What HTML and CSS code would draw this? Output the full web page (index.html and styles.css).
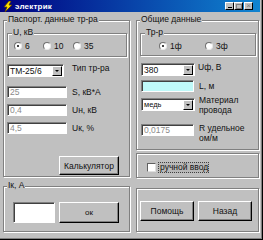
FILE: index.html
```html
<!DOCTYPE html>
<html lang="ru">
<head>
    <meta charset="UTF-8">
    <title>электрик</title>
    <link rel="stylesheet" href="styles.css">
</head>
<body>
<div class="window">
    <div class="titlebar">
        <svg class="app-icon" width="10" height="11" viewBox="0 0 10 11">
            <polygon points="6,0 1,6 4,6 2,11 9,4 6,4 8,0" fill="#ffe000" stroke="#604000" stroke-width="0.8"/>
        </svg>
        <span class="title">электрик</span>
        <div class="caption">
            <span class="cap-btn"><span class="min-glyph"></span></span>
            <span class="cap-btn"><span class="max-glyph"></span></span>
            <span class="cap-btn close">×</span>
        </div>
    </div>

    <div class="client">
        <!-- left column -->
        <div class="col left-col">
            <div class="group passport">
                <div class="gtitle">Паспорт. данные тр-ра</div>
                <div class="group volt">
                    <div class="gtitle inner-title">U, кВ</div>
                    <div class="radios volt-radios">
                        <label class="radio-item w29"><span class="radio checked"></span>6</label>
                        <label class="radio-item w30"><span class="radio"></span>10</label>
                        <label class="radio-item"><span class="radio"></span>35</label>
                    </div>
                </div>
                <div class="row type-row">
                    <div class="combo tm"><span class="combo-text">ТМ-25/6</span><span class="drop"></span></div>
                    <span class="lbl combo-lbl">Тип тр-ра</span>
                </div>
                <div class="row field-row first">
                    <div class="edit disabled w60">25</div>
                    <span class="lbl edit-lbl">S, кВ*А</span>
                </div>
                <div class="row field-row">
                    <div class="edit disabled w60">0,4</div>
                    <span class="lbl edit-lbl">Uн, кВ</span>
                </div>
                <div class="row field-row">
                    <div class="edit disabled w60">4,5</div>
                    <span class="lbl edit-lbl">Uк, %</span>
                </div>
                <div class="btn calc">Калькулятор</div>
            </div>

            <div class="group ik">
                <div class="gtitle">Iк, А</div>
                <div class="row ik-row">
                    <div class="edit ik-edit"></div>
                    <div class="btn ok">ок</div>
                </div>
            </div>
        </div>

        <!-- right column -->
        <div class="col right-col">
            <div class="group common">
                <div class="gtitle">Общие данные</div>
                <div class="group phase">
                    <div class="gtitle inner-title">Тр-р</div>
                    <div class="radios phase-radios">
                        <label class="radio-item w46"><span class="radio checked"></span>1ф</label>
                        <label class="radio-item"><span class="radio"></span>3ф</label>
                    </div>
                </div>
                <div class="row r-row type-row">
                    <div class="combo w54"><span class="combo-text">380</span><span class="drop"></span></div>
                    <span class="lbl combo-lbl">Uф, В</span>
                </div>
                <div class="row r-row len-row">
                    <div class="edit cyan w53"></div>
                    <span class="lbl edit-lbl">L, м</span>
                </div>
                <div class="row r-row mat-row">
                    <div class="combo w54"><span class="combo-text small">медь</span><span class="drop"></span></div>
                    <span class="lbl two-line mat-lbl">Материал<br>провода</span>
                </div>
                <div class="row r-row res-row">
                    <div class="edit disabled w53">0,0175</div>
                    <span class="lbl two-line res-lbl">R удельное<br>ом/м</span>
                </div>
            </div>

            <div class="group manual">
                <label class="check-row"><span class="checkbox"></span><span class="focus">ручной ввод</span></label>
            </div>

            <div class="group actions">
                <div class="row btn-row">
                    <div class="btn w54">Помощь</div>
                    <div class="btn w54">Назад</div>
                </div>
            </div>
        </div>
    </div>
</div>
</body>
</html>
```

FILE: styles.css
```css
body {
    margin: 0;
    background: #c0c0c0;
    font-family: "Liberation Sans", Arial, sans-serif;
    font-size: 8.5px;
    color: #111;
}
.window {
    width: 263px;
    height: 240px;
    box-sizing: border-box;
    padding: 0 2px 2px 0;
    border-right: 1px solid #000;
    border-bottom: 1px solid #000;
    box-shadow: inset -1px -1px 0 #808080;
    overflow: hidden;
}

/* title bar */
.titlebar {
    height: 12px;
    display: flex;
    align-items: center;
    background: linear-gradient(to right, #000080, #1084d0);
    color: #fff;
}
.app-icon {
    margin-left: 3px;
    flex: none;
}
.title {
    margin-left: 2px;
    font-weight: bold;
    font-size: 8px;
    letter-spacing: 0.2px;
}
.caption {
    margin-left: auto;
    margin-right: 7px;
    display: flex;
}
.cap-btn {
    width: 9px;
    height: 8px;
    box-sizing: border-box;
    background: #c0c0c0;
    border: 1px solid;
    border-color: #fff #000 #000 #fff;
    display: flex;
    align-items: center;
    justify-content: center;
    color: #808080;
    font-size: 8px;
    line-height: 6px;
}
.cap-btn.close {
    margin-left: 1px;
}
.min-glyph {
    width: 4px;
    height: 1px;
    background: #000;
    margin-top: 3px;
}
.max-glyph {
    width: 4px;
    height: 3px;
    border: 1px solid #808080;
}

/* client area */
.client {
    display: flex;
    gap: 6px;
    padding: 8px 0 0 3px;
}
.col {
    display: flex;
    flex-direction: column;
}
.left-col { width: 127px; }
.right-col { width: 123px; }

/* etched group boxes */
.group {
    box-sizing: border-box;
    border: 1px solid #808080;
    box-shadow: inset 1px 1px 0 #fff, 1px 1px 0 #fff;
}
.gtitle {
    display: table;
    height: 10px;
    line-height: 10px;
    margin: -7px 0 0 3px;
    padding: 0 1px;
    background: #c0c0c0;
    white-space: nowrap;
}
.gtitle.inner-title { margin-left: 4px; }

.passport { height: 157px; }
.ik { height: 46px; margin-top: 9px; }
.common { height: 130px; }
.manual { height: 25px; margin-top: 3px; }
.actions { height: 44px; margin-top: 10px; }

.volt {
    height: 24px;
    margin: 9px 2px 0 3px;
}
.phase {
    height: 23px;
    margin: 9px 2px 0 3px;
}

/* radio buttons */
.radios {
    display: flex;
    margin-top: 5px;
}
.volt-radios { padding-left: 6px; }
.phase-radios { padding-left: 18px; }
.radio-item {
    display: flex;
    align-items: center;
    gap: 3px;
    height: 8px;
    line-height: 8px;
}
.w29 { width: 29px; }
.w30 { width: 30px; }
.w46 { width: 46px; }
.radio {
    width: 8px;
    height: 8px;
    box-sizing: border-box;
    border-radius: 50%;
    background: #fff;
    border: 1px solid;
    border-color: #707070 #e8e8e8 #e8e8e8 #707070;
    position: relative;
}
.radio.checked::after {
    content: "";
    position: absolute;
    left: 2px;
    top: 2px;
    width: 2px;
    height: 2px;
    border-radius: 50%;
    background: #000;
}

/* rows */
.row {
    display: flex;
    align-items: flex-start;
}
.type-row { margin: 7px 0 0 3px; }
.type-row .combo-lbl { margin-left: 8px; }
.field-row { margin: 6px 0 0 3px; }
.field-row.first { margin-top: 9px; }
.r-row { margin-left: 4px; }
.r-row.type-row .combo-lbl { margin-left: 3px; }
.len-row { margin-top: 4px; }
.mat-row { margin-top: 6px; }
.res-row { margin-top: 9px; }

.lbl {
    line-height: 10px;
    white-space: nowrap;
}
.combo-lbl { margin-top: -1px; }
.edit-lbl { margin: 1px 0 0 5px; }
.two-line { line-height: 10px; }
.mat-lbl { margin: -3px 0 0 4px; }
.res-lbl { margin: -1px 0 0 5px; }

/* combo box */
.combo {
    width: 57px;
    height: 13px;
    box-sizing: border-box;
    background: #fff;
    border: 1px solid;
    border-color: #808080 #fff #fff #808080;
    box-shadow: inset 1px 1px 0 #404040;
    display: flex;
    align-items: center;
    padding: 1px 1px 0 2px;
}
.w54 { width: 54px; }
.combo-text {
    flex: 1;
    line-height: 10px;
}
.combo-text.small { font-size: 7.5px; }
.drop {
    width: 10px;
    height: 10px;
    box-sizing: border-box;
    background: #c0c0c0;
    border: 1px solid;
    border-color: #fff #000 #000 #fff;
    position: relative;
}
.drop::after {
    content: "";
    position: absolute;
    left: 2px;
    top: 3px;
    border-left: 2px solid transparent;
    border-right: 2px solid transparent;
    border-top: 2px solid #000;
}

/* edits */
.edit {
    height: 12px;
    box-sizing: border-box;
    background: #fff;
    border: 1px solid;
    border-color: #808080 #fff #fff #808080;
    box-shadow: inset 1px 1px 0 #404040;
    padding: 0 2px;
    line-height: 10px;
}
.edit.disabled { color: #8a8a8a; }
.w60 { width: 60px; }
.w53 { width: 53px; }
.edit.cyan { background: #bff9f9; }

/* buttons */
.btn {
    box-sizing: border-box;
    background: #c0c0c0;
    border: 1px solid;
    border-color: #fff #000 #000 #fff;
    box-shadow: inset -1px -1px 0 #808080;
    display: flex;
    align-items: center;
    justify-content: center;
}
.calc {
    width: 60px;
    height: 19px;
    margin: 22px 0 0 55px;
}
.ik-row { margin: 12px 0 0 9px; }
.ik-edit {
    width: 42px;
    height: 21px;
}
.ok {
    width: 60px;
    height: 21px;
    margin-left: 4px;
    font-size: 8px;
}
.btn-row {
    margin: 12px 0 0 3px;
    gap: 4px;
}
.btn-row .btn { height: 20px; }

/* checkbox */
.check-row {
    display: flex;
    align-items: center;
    margin: 8px 0 0 10px;
}
.checkbox {
    width: 9px;
    height: 9px;
    box-sizing: border-box;
    background: #fff;
    border: 1px solid;
    border-color: #606060 #e0e0e0 #e0e0e0 #606060;
}
.focus {
    margin-left: 2px;
    padding: 0 1px 0 2px;
    height: 11px;
    line-height: 11px;
    box-sizing: border-box;
    outline: 1px dotted #404040;
    outline-offset: -1px;
    background: #b8b8b8;
}
```
